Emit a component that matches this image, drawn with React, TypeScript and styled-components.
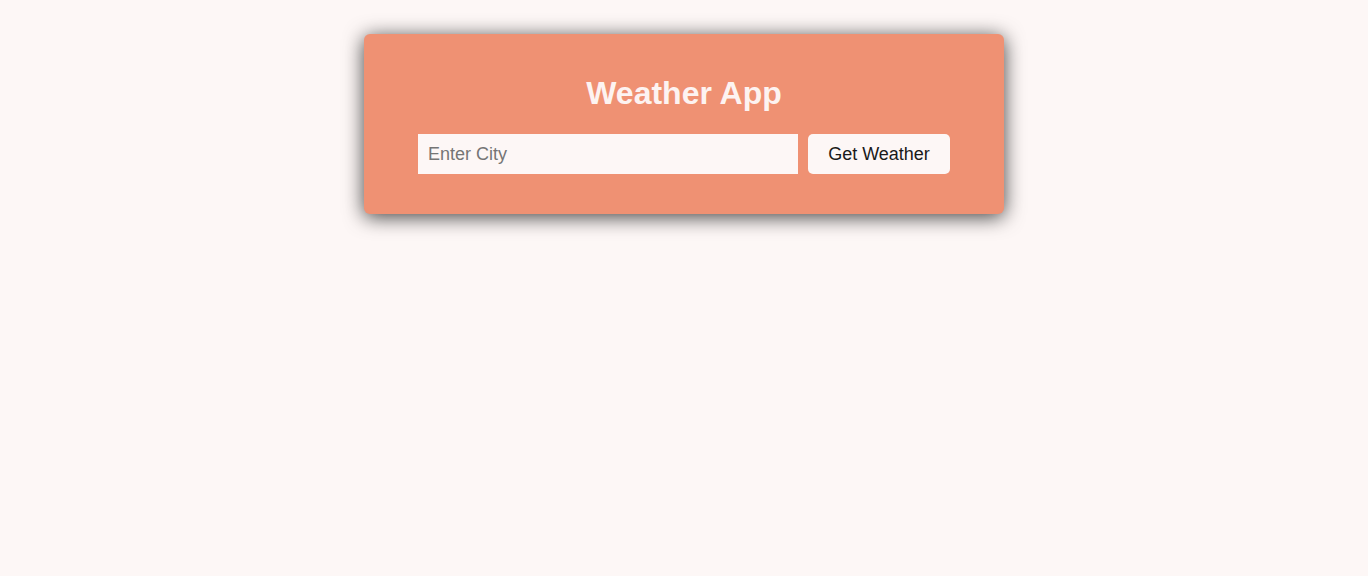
import React, { useState } from "react";
import styled, { createGlobalStyle } from "styled-components";

const GlobalStyle = createGlobalStyle`
  html, body {
    margin: 0;
    padding: 0;
    background: #fdf7f6;
    font-family: "Liberation Sans", Arial, sans-serif;
  }
`;

const Page = styled.div`
  min-height: 576px;
  display: flex;
  justify-content: center;
  align-items: flex-start;
  padding-top: 34px;
  box-sizing: border-box;
`;

const Card = styled.div`
  width: 640px;
  box-sizing: border-box;
  padding: 41px 20px 40px;
  background: #ef9173;
  border-radius: 6px;
  box-shadow: 0 3px 20px rgba(0, 0, 0, 0.75);
  display: flex;
  flex-direction: column;
  align-items: center;
`;

const Title = styled.h1`
  margin: 0 0 22px;
  font-size: 32px;
  font-weight: 700;
  color: #fdf3f1;
  line-height: normal;
`;

const Row = styled.div`
  display: flex;
  gap: 10px;
`;

const Input = styled.input`
  width: 380px;
  height: 40px;
  box-sizing: border-box;
  border: none;
  outline: none;
  padding: 0 10px;
  background: #fdf7f6;
  font-family: "Liberation Sans", Arial, sans-serif;
  font-size: 18px;
  color: #222;
  &::placeholder {
    color: #757575;
  }
`;

const Button = styled.button`
  height: 40px;
  width: 142px;
  box-sizing: border-box;
  border: none;
  border-radius: 5px;
  background: #fdf7f6;
  font-family: "Liberation Sans", Arial, sans-serif;
  font-size: 18px;
  color: #1a1a1a;
  cursor: pointer;
`;

export default function App() {
  const [city, setCity] = useState("");
  return (
    <>
      <GlobalStyle />
      <Page>
        <Card>
          <Title>Weather App</Title>
          <Row>
            <Input
              placeholder="Enter City"
              value={city}
              onChange={(e) => setCity(e.target.value)}
            />
            <Button>Get Weather</Button>
          </Row>
        </Card>
      </Page>
    </>
  );
}
